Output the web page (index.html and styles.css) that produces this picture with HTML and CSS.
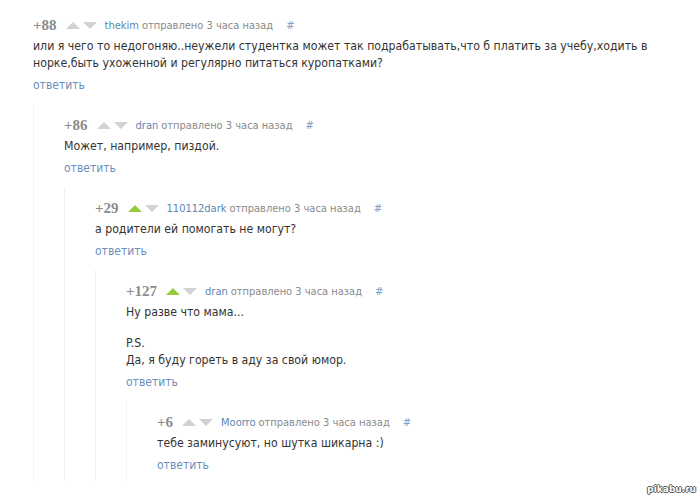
FILE: index.html
```
<!DOCTYPE html>
<html lang="ru">
<head>
    <meta charset="UTF-8">
    <title>Комментарии</title>
    <link rel="stylesheet" href="styles.css">
</head>
<body>
    <div class="thread">
        <div class="comment">
            <div class="comment-head">
                <span class="rating">+88</span>
                <span class="vote up"></span><span class="vote down"></span>
                <a class="author" href="#">thekim</a>
                <span class="time">отправлено 3 часа назад</span>
                <a class="hash" href="#">#</a>
            </div>
            <div class="comment-text">
                <p>или я чего то недогоняю..неужели студентка может так подрабатывать,что б платить за учебу,ходить в<br>норке,быть ухоженной и регулярно питаться куропатками?</p>
            </div>
            <a class="reply" href="#">ответить</a>

            <div class="children">
                <div class="comment">
                    <div class="comment-head">
                        <span class="rating">+86</span>
                        <span class="vote up"></span><span class="vote down"></span>
                        <a class="author" href="#">dran</a>
                        <span class="time">отправлено 3 часа назад</span>
                        <a class="hash" href="#">#</a>
                    </div>
                    <div class="comment-text">
                        <p>Может, например, пиздой.</p>
                    </div>
                    <a class="reply" href="#">ответить</a>

                    <div class="children">
                        <div class="comment">
                            <div class="comment-head">
                                <span class="rating">+29</span>
                                <span class="vote up voted"></span><span class="vote down"></span>
                                <a class="author" href="#">110112dark</a>
                                <span class="time">отправлено 3 часа назад</span>
                                <a class="hash" href="#">#</a>
                            </div>
                            <div class="comment-text">
                                <p>а родители ей помогать не могут?</p>
                            </div>
                            <a class="reply" href="#">ответить</a>

                            <div class="children">
                                <div class="comment">
                                    <div class="comment-head">
                                        <span class="rating">+127</span>
                                        <span class="vote up voted"></span><span class="vote down"></span>
                                        <a class="author" href="#">dran</a>
                                        <span class="time">отправлено 3 часа назад</span>
                                        <a class="hash" href="#">#</a>
                                    </div>
                                    <div class="comment-text">
                                        <p>Ну разве что мама...</p>
                                        <p>P.S.<br>Да, я буду гореть в аду за свой юмор.</p>
                                    </div>
                                    <a class="reply" href="#">ответить</a>

                                    <div class="children last">
                                        <div class="comment">
                                            <div class="comment-head">
                                                <span class="rating">+6</span>
                                                <span class="vote up"></span><span class="vote down"></span>
                                                <a class="author" href="#">Moorro</a>
                                                <span class="time">отправлено 3 часа назад</span>
                                                <a class="hash" href="#">#</a>
                                            </div>
                                            <div class="comment-text">
                                                <p>тебе заминусуют, но шутка шикарна :)</p>
                                            </div>
                                            <a class="reply" href="#">ответить</a>
                                        </div>
                                    </div>
                                </div>
                            </div>
                        </div>
                    </div>
                </div>
            </div>
        </div>
    </div>
    <div class="watermark">pikabu.ru</div>
</body>
</html>
```
FILE: styles.css
```
body {
    margin: 0;
    background-color: #fff;
    font-family: "DejaVu Sans Condensed", "DejaVu Sans", sans-serif;
    color: #333;
    width: 700px;
    height: 500px;
    overflow: hidden;
    position: relative;
}
.thread {
    padding: 15px 0 0 33px;
}
.comment-head {
    height: 20px;
    display: flex;
    align-items: center;
    white-space: nowrap;
}
.rating {
    font-family: "Liberation Serif", serif;
    font-weight: bold;
    font-size: 15px;
    color: #8c8c8c;
    margin-right: 9px;
}
.vote {
    width: 0;
    height: 0;
    border-left: 7px solid transparent;
    border-right: 7px solid transparent;
    margin-right: 3px;
}
.vote.up {
    border-bottom: 7px solid #d2d2d2;
}
.vote.up.voted {
    border-bottom-color: #96c93d;
}
.vote.down {
    border-top: 7px solid #d2d2d2;
    margin-right: 8px;
}
.author {
    font-size: 11px;
    color: #5b86b5;
    text-decoration: none;
    margin-right: 3px;
}
.time {
    font-size: 11px;
    color: #8a8a8a;
    margin-right: 13px;
}
.hash {
    font-size: 11px;
    color: #7f9fc4;
    text-decoration: none;
}
.comment-text {
    font-size: 12.2px;
    line-height: 17px;
    margin-top: 3px;
}
.comment-text p {
    margin: 0;
}
.comment-text p + p {
    margin-top: 14px;
}
.reply {
    display: block;
    font-size: 12px;
    line-height: 17px;
    margin-top: 5px;
    color: #6b8fbd;
    text-decoration: none;
}
.children {
    margin-top: 11px;
    padding: 10px 0 0 30px;
    border-left: 1px dotted #e6e6e6;
}
.children.last {
    padding-bottom: 8px;
}
.watermark {
    position: absolute;
    right: 4px;
    bottom: 6px;
    font-family: "DejaVu Sans", sans-serif;
    font-size: 9px;
    font-weight: bold;
    color: #fff;
    text-shadow: 1px 0 #555, -1px 0 #555, 0 1px #555, 0 -1px #555;
}
```
